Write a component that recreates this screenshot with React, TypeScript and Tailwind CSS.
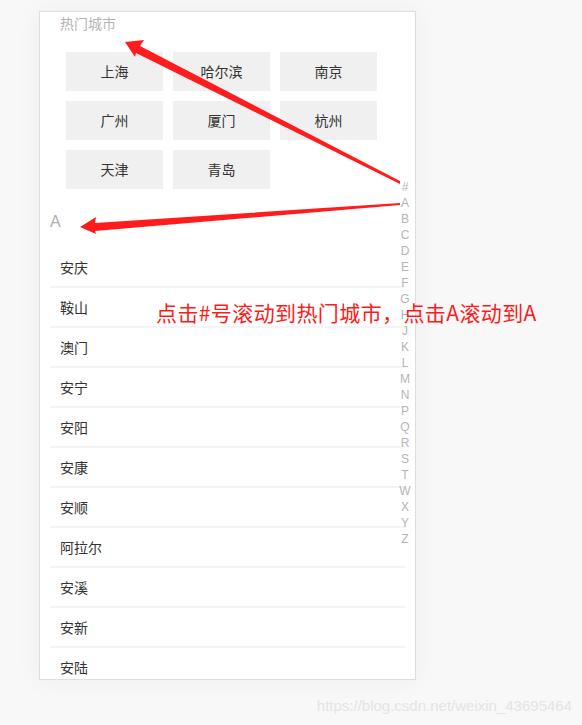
import React from "react";

const hotCities = ["上海", "哈尔滨", "南京", "广州", "厦门", "杭州", "天津", "青岛"];

const cityA = ["安庆", "鞍山", "澳门", "安宁", "安阳", "安康", "安顺", "阿拉尔", "安溪", "安新", "安陆"];

const letters = "#ABCDEFGHJKLMNPQRSTWXYZ".split("");

const cjk = { fontFamily: '"Noto Sans CJK SC", "Noto Sans", sans-serif' };
const latin = { fontFamily: '"Liberation Sans", Arial, sans-serif' };

function Arrows() {
  return (
    <svg
      className="absolute left-0 top-0 pointer-events-none"
      width={582}
      height={725}
      viewBox="0 0 582 725"
    >
      {/* arrow to 热门城市 */}
      <polygon points="125,42 144,40 140,46 400,181 400,184 136,53 135,57" fill="#ff1c1c" />
      {/* arrow to A */}
      <polygon points="80,227 96,217 95,223 400,203 400,205 95,231 96,234" fill="#ff1c1c" />
    </svg>
  );
}

export default function App() {
  return (
    <div className="relative w-[582px] h-[725px] overflow-hidden bg-[#f8f8f8]" style={cjk}>
      <div className="pt-[11px] pl-[39px]">
        <div className="relative w-[377px] h-[669px] overflow-hidden border border-[#dedede] bg-white shadow-[0_0_24px_rgba(0,0,0,0.05)]">
          {/* 热门城市 */}
          <div className="pl-[20px] pt-[2px] text-[14px] leading-[18px] text-[#b4b4b4]">热门城市</div>
          <div className="mt-[20px] grid grid-cols-[97px_97px_97px] gap-[10px] pl-[26px]">
            {hotCities.map((c) => (
              <div
                key={c}
                className="flex h-[39px] items-center justify-center bg-[#f0f0f0] text-[14px] text-[#333]"
              >
                {c}
              </div>
            ))}
          </div>

          {/* A */}
          <div className="mt-[22px] pl-[10px] text-[16px] leading-[22px] text-[#b0b0b0]" style={latin}>
            A
          </div>
          <div className="mt-[15px] mx-[10px]">
            {cityA.map((c) => (
              <div
                key={c}
                className="flex h-[40px] items-center border-b-2 border-[#f4f4f4] pl-[10px] text-[14px] text-[#333]"
              >
                {c}
              </div>
            ))}
          </div>

          {/* index bar */}
          <div
            className="absolute right-[2px] top-[167px] flex w-[16px] flex-col items-center text-[12px] leading-[16px] text-[#b4b4b4]"
            style={latin}
          >
            {letters.map((l) => (
              <span key={l}>{l}</span>
            ))}
          </div>
        </div>
      </div>

      <Arrows />

      <div className="absolute left-[156px] top-[298px] whitespace-nowrap text-[21px] leading-[28px] tracking-[0.4px] text-[#ff1a1a]">
        点击#号滚动到热门城市，点击A滚动到A
      </div>

      <div className="absolute right-[10px] top-[697px] text-[15px] leading-[18px] text-[#e4e4e4]" style={latin}>
        https://blog.csdn.net/weixin_43695464
      </div>
    </div>
  );
}
